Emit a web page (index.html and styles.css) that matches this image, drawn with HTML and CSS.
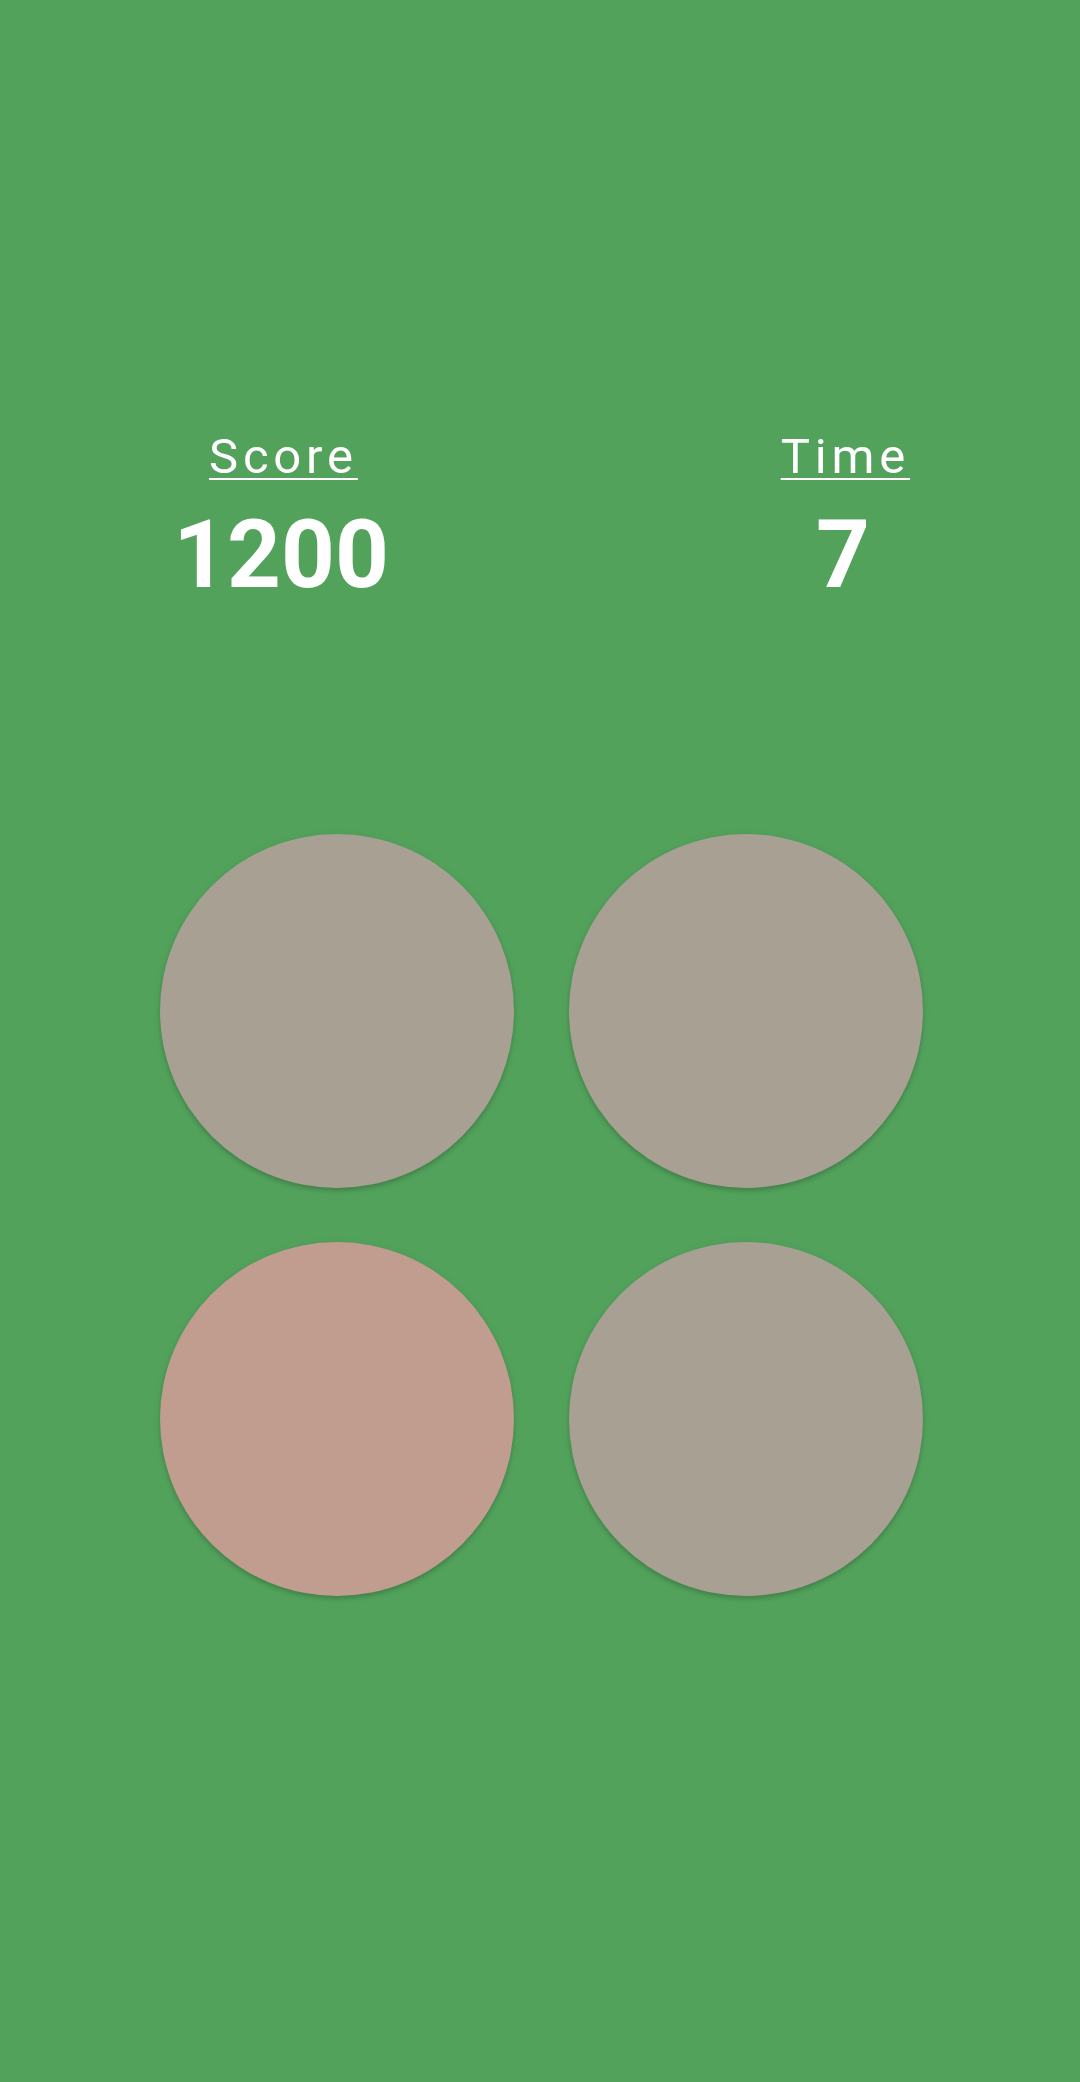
FILE: index.html
```html
<!DOCTYPE html>
<html>
<head>
<meta charset="utf-8">
<link rel="stylesheet" href="styles.css">
</head>
<body>
<div class="screen">
  <div class="stats">
    <div class="stat">
      <div class="label">Score</div>
      <div class="value">1200</div>
    </div>
    <div class="stat">
      <div class="label">Time</div>
      <div class="value">7</div>
    </div>
  </div>
  <div class="board">
    <div class="pad pad-grey"></div>
    <div class="pad pad-grey"></div>
    <div class="pad pad-pink"></div>
    <div class="pad pad-grey"></div>
  </div>
</div>
</body>
</html>
```
FILE: styles.css
```css
html, body {
  margin: 0;
  padding: 0;
}
body {
  background: #52a25c;
  font-family: Roboto, "Noto Sans", sans-serif;
  color: #ffffff;
}
.screen {
  width: 1080px;
  height: 2082px;
  display: flex;
  flex-direction: column;
}
.stats {
  display: grid;
  grid-template-columns: 300px 300px;
  column-gap: 262px;
  padding-left: 131px;
  padding-top: 432px;
}
.stat {
  display: flex;
  flex-direction: column;
  align-items: center;
}
.label {
  font-size: 49px;
  line-height: 49px;
  font-weight: 400;
  letter-spacing: 4.8px;
  padding-left: 4.8px;
  text-decoration: underline;
  text-decoration-thickness: 2px;
  text-underline-offset: 5px;
}
.value {
  margin-top: 27px;
  font-size: 94px;
  line-height: 94px;
  font-weight: 700;
}
.board {
  margin-top: 232px;
  align-self: center;
  display: grid;
  grid-template-columns: 354px 354px;
  grid-auto-rows: 354px;
  gap: 54px 55px;
  margin-left: 3px;
}
.pad {
  border-radius: 50%;
  box-shadow: 0 3px 4px rgba(0, 0, 0, 0.16), 0 1px 10px rgba(0, 0, 0, 0.06);
}
.pad-grey {
  background: #a7a093;
}
.pad-pink {
  background: #c19d90;
}
```
